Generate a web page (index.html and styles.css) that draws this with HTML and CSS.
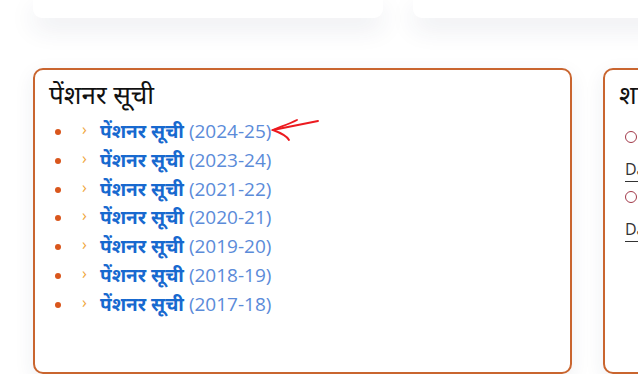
FILE: index.html
```html
<!DOCTYPE html>
<html>
<head>
  <meta charset="utf-8">
  <title>पेंशनर सूची</title>
  <link rel="stylesheet" href="styles.css">
</head>
<body>
  <div class="top-row">
    <div class="top-card wide"></div>
    <div class="top-card"></div>
  </div>

  <div class="cards">
    <div class="card list-card">
      <h3 class="card-title">पेंशनर सूची</h3>
      <ul class="links">
        <li><span class="chev">›</span><a href="#">पेंशनर सूची</a> <span class="year">(2024-25)</span>
          <svg class="arrow" width="52" height="28" viewBox="0 0 52 28">
            <path d="M48 5 C38 7 18 11 3 14" />
            <path d="M27 4 C19 8 10 11 3 14 C11 17 17 20 19 24" />
          </svg>
        </li>
        <li><span class="chev">›</span><a href="#">पेंशनर सूची</a> <span class="year">(2023-24)</span></li>
        <li><span class="chev">›</span><a href="#">पेंशनर सूची</a> <span class="year">(2021-22)</span></li>
        <li><span class="chev">›</span><a href="#">पेंशनर सूची</a> <span class="year">(2020-21)</span></li>
        <li><span class="chev">›</span><a href="#">पेंशनर सूची</a> <span class="year">(2019-20)</span></li>
        <li><span class="chev">›</span><a href="#">पेंशनर सूची</a> <span class="year">(2018-19)</span></li>
        <li><span class="chev">›</span><a href="#">पेंशनर सूची</a> <span class="year">(2017-18)</span></li>
      </ul>
    </div>

    <div class="card side-card">
      <h3 class="card-title">शासनादेश</h3>
      <div class="opt"><span class="radio"></span></div>
      <div class="date">Date</div>
      <div class="opt"><span class="radio"></span></div>
      <div class="date">Date</div>
    </div>
  </div>
</body>
</html>
```

FILE: styles.css
```css
* {
  box-sizing: border-box;
}

body {
  margin: 0;
  background: #fff;
  font-family: 'Open Sans', 'Noto Sans', sans-serif;
  overflow: hidden;
  height: 374px;
}

.top-row {
  display: flex;
  gap: 30px;
  padding-left: 33px;
}

.top-card {
  flex-shrink: 0;
  width: 400px;
  height: 18px;
  background: #fff;
  border-radius: 0 0 9px 9px;
  box-shadow: 0 10px 26px rgba(40, 50, 90, 0.10);
}

.top-card.wide {
  width: 350px;
}

.cards {
  display: flex;
  gap: 31px;
  padding-left: 33px;
  margin-top: 50px;
}

.card {
  flex-shrink: 0;
  height: 306px;
  background: #fff;
  border: 2px solid #c9652f;
  border-radius: 10px;
  box-shadow: 0 6px 20px rgba(40, 50, 90, 0.08);
}

.list-card {
  width: 539px;
  padding: 7px 14px;
}

.side-card {
  width: 300px;
  padding: 7px 14px;
  white-space: nowrap;
}

.card-title {
  margin: 0 0 6px;
  font-size: 26px;
  font-weight: 400;
  color: #111;
  line-height: 34px;
}

.side-card .card-title {
  margin-bottom: 11px;
}

.links {
  margin: 0;
  padding-left: 6px;
  list-style: none;
}

.links li {
  position: relative;
  display: flex;
  align-items: baseline;
  font-size: 19px;
  line-height: 28.8px;
  padding-left: 27px;
}

.links li::before {
  content: '';
  position: absolute;
  left: 0;
  top: 12px;
  width: 6px;
  height: 6px;
  border-radius: 50%;
  background: #d9561c;
}

.chev {
  position: absolute;
  left: 27px;
  top: -2px;
  color: #f0a63a;
  font-size: 16px;
}

.links a {
  margin-left: 18px;
  color: #1769cf;
  font-weight: 700;
  text-decoration: none;
}

.year {
  margin-left: 5px;
  color: #5b8bd9;
}

.arrow {
  align-self: flex-start;
  margin-top: -1px;
  margin-left: -1px;
  fill: none;
  stroke: #ec1a1f;
  stroke-width: 1.9;
  stroke-linecap: round;
}

.opt {
  height: 26px;
  display: flex;
  align-items: center;
  padding-top: 4px;
}

.radio {
  display: inline-block;
  width: 12px;
  height: 12px;
  margin-left: 6px;
  border: 1px solid #a23a4a;
  border-radius: 50%;
}

.date {
  margin-left: 6px;
  width: 200px;
  padding-top: 9px;
  font-size: 16px;
  line-height: 24px;
  color: #333;
  border-bottom: 1px solid #333;
}
```
